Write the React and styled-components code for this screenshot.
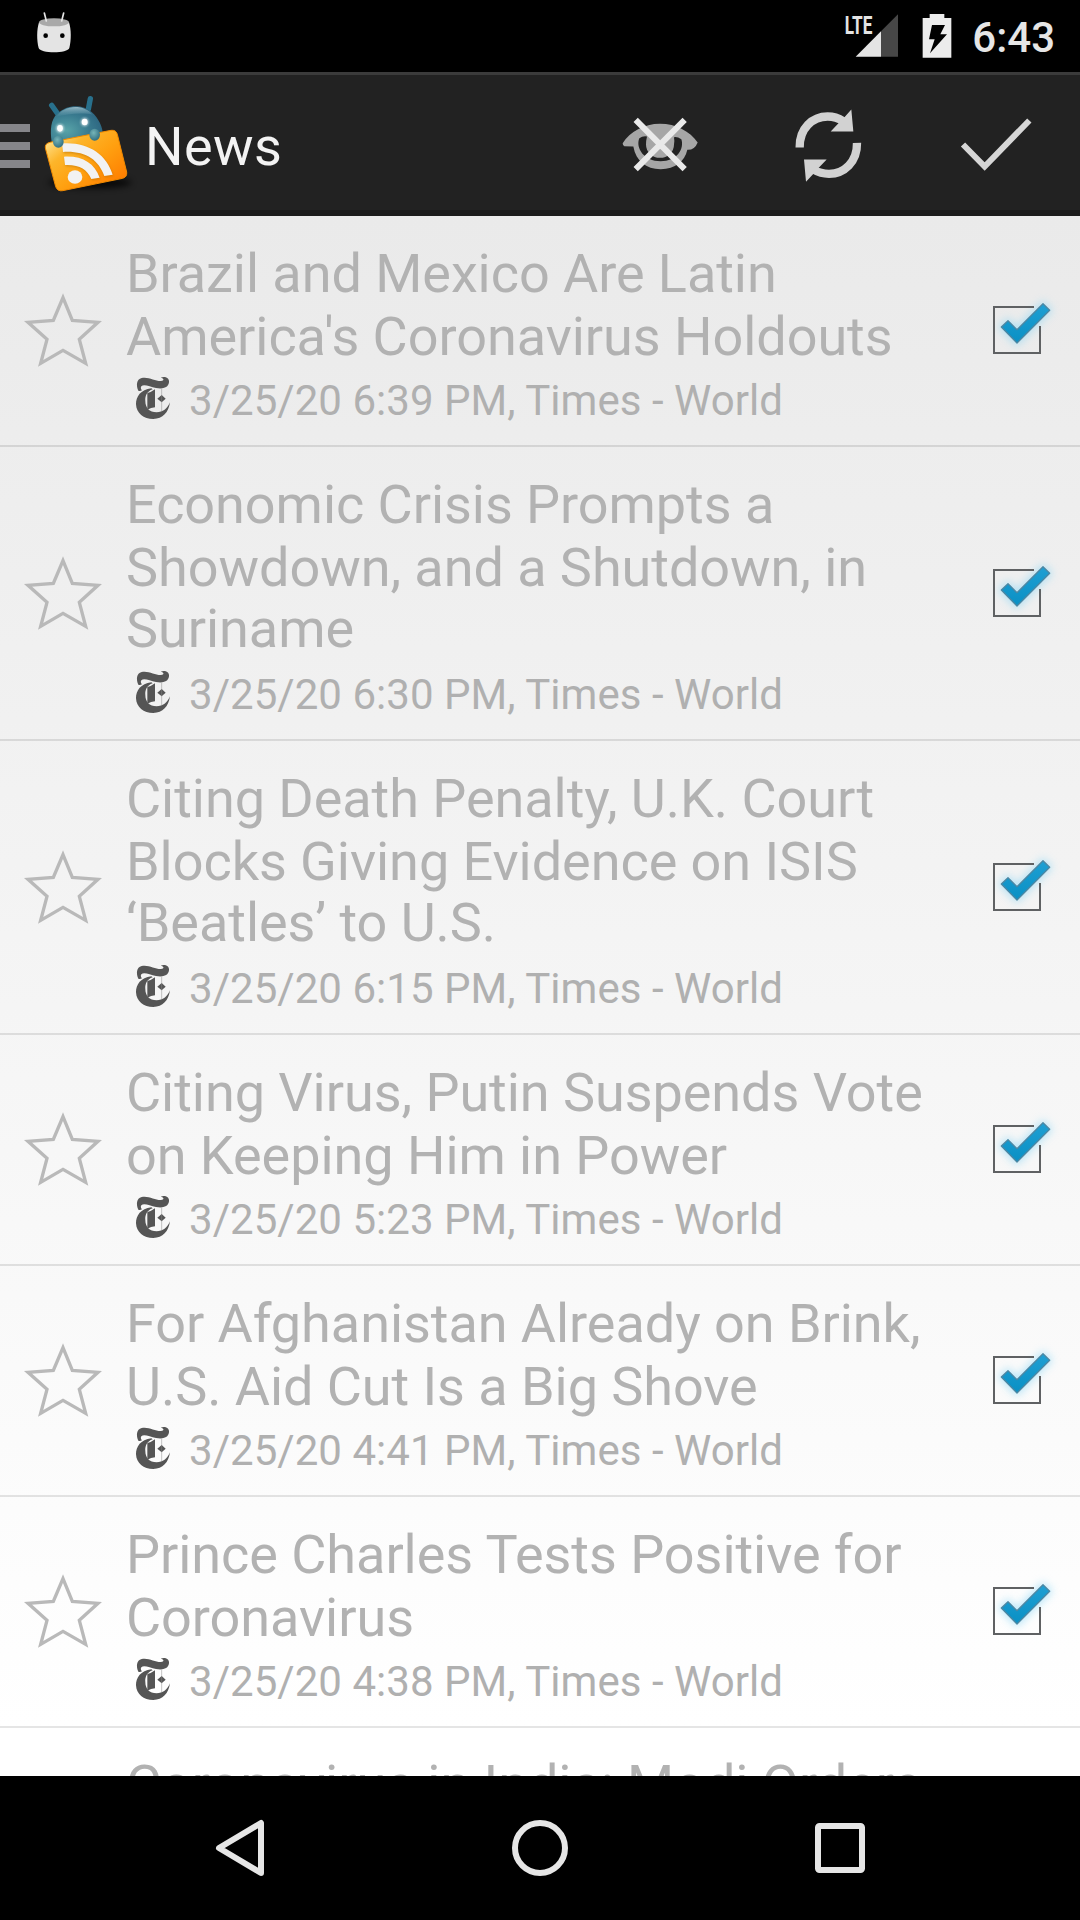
import React from 'react';
import styled, { createGlobalStyle } from 'styled-components';

const GlobalStyle = createGlobalStyle`
  body {
    margin: 0;
    background: #000;
    font-family: Roboto, "Liberation Sans", sans-serif;
  }
`;

const Screen = styled.div`
  display: flex;
  flex-direction: column;
  width: 1080px;
  height: 1920px;
  overflow: hidden;
`;

const StatusBar = styled.div`
  display: flex;
  justify-content: space-between;
  align-items: center;
  flex: none;
  height: 72px;
  box-sizing: border-box;
  padding: 0 25px 0 36px;
  background: #000;
`;

const Notifications = styled.div`
  display: flex;
  padding-bottom: 6px;
`;

const SystemIcons = styled.div`
  display: flex;
  align-items: center;
  gap: 22px;

  svg {
    overflow: visible;
  }
`;

const Clock = styled.div`
  margin-left: -2px;
  padding-top: 4px;
  font-size: 42px;
  line-height: 50px;
  font-weight: 500;
  color: #e6e6e6;
`;

const ActionBar = styled.header`
  display: flex;
  align-items: center;
  flex: none;
  height: 144px;
  box-sizing: border-box;
  border-top: 3px solid #3b3b3b;
  border-bottom: 6px solid #1b1b1b;
  background: #222;
`;

const Burger = styled.div`
  display: flex;
  flex-direction: column;
  gap: 10px;
  padding-top: 7px;
  width: 30px;
`;

const BurgerBar = styled.div`
  height: 8px;
  background: #86868a;
`;

const LogoSlot = styled.div`
  display: flex;
  flex: none;
  width: 110px;
  padding-top: 5px;
`;

const Title = styled.h1`
  margin: 0 0 0 5px;
  padding-top: 8px;
  flex: 1;
  font-size: 54px;
  line-height: 63px;
  font-weight: 400;
  letter-spacing: 0.4px;
  color: #f3f3f3;
`;

const Action = styled.button`
  display: flex;
  align-items: center;
  justify-content: center;
  width: 168px;
  height: 135px;
  padding: 0;
  border: 0;
  background: none;
`;

const List = styled.main`
  flex: 1;
  min-height: 0;
  overflow: hidden;
  background: linear-gradient(#eaeaea, #fff 1510px);
`;

const Row = styled.article`
  display: flex;
  align-items: center;
  border-bottom: 2px solid rgba(0, 0, 0, 0.1);
`;

const StarSlot = styled.div`
  display: flex;
  flex: none;
  width: 104px;
  padding: 0 0 1px 22px;
`;

const Entry = styled.div`
  flex: 1;
  padding: ${({ $top = 26 }) => $top}px 0 20px;
  white-space: nowrap;
`;

const Headline = styled.h2`
  display: flex;
  flex-direction: column;
  margin: 0 0 8px;
  font-weight: 400;
`;

const HeadlineLine = styled.span`
  font-size: 54px;
  line-height: 63px;
  letter-spacing: -0.05px;
  color: #b2b2b2;

  &:nth-child(3) {
    margin: -2px 0 2px;
  }
`;

const Meta = styled.div`
  display: flex;
  align-items: flex-start;
  height: 49px;
  padding-left: 9px;
  font-size: 42px;
  line-height: 49px;
  letter-spacing: 0.04px;
  color: #b0b0b0;
`;

const MetaText = styled.span`
  margin-left: 18px;
`;

const CheckSlot = styled.div`
  display: flex;
  flex: none;
  padding: 0 15px 1px 0;
`;

const NavBar = styled.nav`
  display: flex;
  justify-content: center;
  align-items: center;
  flex: none;
  height: 144px;
  background: #000;
`;

const NavButton = styled.button`
  display: flex;
  justify-content: center;
  align-items: center;
  width: 300px;
  height: 144px;
  padding: 0;
  border: 0;
  background: none;
`;

const RobotHead = () => (
  <svg width="36" height="44" viewBox="108 34 108 132">
    <path d="M117 68C110 90 110 122 116 145C120 162 204 162 208 145C214 122 214 90 207 68Z" fill="#e4e4e4" />
    <ellipse cx="162" cy="68" rx="45" ry="12" fill="#a9a9a9" />
    <path d="M133 40L139 64M191 40L185 64" stroke="#e4e4e4" strokeWidth="5" strokeLinecap="round" />
    <circle cx="137" cy="108" r="7" fill="#000" />
    <circle cx="187" cy="108" r="7" fill="#000" />
  </svg>
);

const Signal = () => (
  <svg width="56" height="46" viewBox="72 39 168 138">
    <text x="74" y="101" fontFamily="Roboto, sans-serif" fontWeight="700" fontSize="79" textLength="83" lengthAdjust="spacingAndGlyphs" fill="#e4e4e4">LTE</text>
    <path d="M183 94L234 43V170H183Z" fill="#474747" />
    <path d="M107 170L183 94V170Z" fill="#e4e4e4" />
  </svg>
);

const Battery = () => (
  <svg width="30" height="46" viewBox="307 39 90 138">
    <path d="M309 54H330V42H374V54H395V173H309Z" fill="#ececec" />
    <path d="M337 75H376L362 103H382L331 160L345 118H328Z" fill="#000" />
  </svg>
);

const AppLogo = () => (
  <svg width="110" height="130" viewBox="0 0 330 390">
    <defs>
      <radialGradient id="bodyFill" cx="0.3" cy="0.65" r="0.75">
        <stop offset="0" stopColor="#58a3a8" />
        <stop offset="0.55" stopColor="#3a7c90" />
        <stop offset="1" stopColor="#2b627e" />
      </radialGradient>
      <linearGradient id="shine" x1="0" y1="0" x2="0" y2="1">
        <stop offset="0" stopColor="#b9d4dc" stopOpacity="0.75" />
        <stop offset="1" stopColor="#6fa5b5" stopOpacity="0" />
      </linearGradient>
      <linearGradient id="cardFill" x1="0" y1="0.1" x2="0.9" y2="0.9">
        <stop offset="0" stopColor="#ffeaa0" />
        <stop offset="0.3" stopColor="#fdb52a" />
        <stop offset="0.6" stopColor="#ffa010" />
        <stop offset="1" stopColor="#ff7d00" />
      </linearGradient>
      <radialGradient id="handFill" cx="0.4" cy="0.35" r="0.7">
        <stop offset="0" stopColor="#76b5b8" />
        <stop offset="1" stopColor="#2e6c80" />
      </radialGradient>
      <filter id="soft" x="-30%" y="-100%" width="160%" height="300%">
        <feGaussianBlur stdDeviation="9" />
      </filter>
      <filter id="glow" x="-100%" y="-100%" width="300%" height="300%">
        <feGaussianBlur stdDeviation="3" />
      </filter>
    </defs>
    <ellipse cx="180" cy="308" rx="125" ry="17" fill="#050505" opacity="0.75" filter="url(#soft)" />
    <path d="M65 76L84 103M181 56L175 88" stroke="#28708c" strokeWidth="16" strokeLinecap="round" />
    <path d="M65 185C60 150 62 118 82 101C112 72 158 72 185 96C207 116 218 142 219 165L150 190Z" fill="url(#bodyFill)" />
    <path d="M78 112C100 74 160 70 188 104C160 98 110 100 78 112Z" fill="url(#shine)" />
    <g fill="#fff">
      <ellipse cx="90" cy="145" rx="12" ry="13" opacity="0.6" filter="url(#glow)" />
      <ellipse cx="164" cy="126" rx="12" ry="13" opacity="0.6" filter="url(#glow)" />
      <ellipse cx="90" cy="145" rx="8.500" ry="10" />
      <ellipse cx="164" cy="126" rx="9" ry="10" />
    </g>
    <path d="M60 187L243 151Q258 149 262 163L290 276Q292 291 278 295L98 332Q83 335 77 320L46 204Q44 191 60 187Z" fill="url(#cardFill)" stroke="#f18a00" strokeWidth="3" />
    <g fill="#b66a00" opacity="0.5" transform="translate(2 4)" filter="url(#glow)">
      <path d="M96 190C172 184 230 222 248 284L223 288C205 238 165 212 99 216Z" />
      <path d="M102 230C157 227 193 249 209 293L184 297C171 268 148 253 105 255Z" />
    </g>
    <g fill="#f2f2f2">
      <path d="M96 190C172 184 230 222 248 284L223 288C205 238 165 212 99 216Z" />
      <path d="M102 230C157 227 193 249 209 293L184 297C171 268 148 253 105 255Z" />
      <ellipse cx="135" cy="291" rx="22" ry="20" />
    </g>
    <ellipse cx="85" cy="185" rx="16" ry="18" fill="url(#handFill)" />
    <ellipse cx="194" cy="164" rx="16" ry="18" fill="url(#handFill)" />
  </svg>
);

const HideReadIcon = () => (
  <svg width="84" height="84" viewBox="54 121.5 252 252">
    <path
      d="M68 248C90 214 132 190 180 190C228 190 270 213 293 246Q284 269 262 268C254 303 226 326 182 326C138 326 108 302 100 258L73 257Q68 254 68 248ZM118 233C106 262 132 302 182 302C230 302 254 265 244 236Q232 228 222 230Q224 240 222 252A42 40 0 0 1 138 252Q138 240 141 228Q128 226 118 233Z"
      fill="#a6a6a6"
      fillRule="evenodd"
    />
    <path d="M107 178L254 326M254 178L107 326" stroke="#e9e9e9" strokeWidth="18" />
  </svg>
);

const RefreshIcon = () => (
  <svg width="84" height="84" viewBox="558 121.5 252 252">
    <g fill="none" stroke="#d2d2d2" strokeWidth="25">
      <path d="M599 261C598 203 638 168 683 168Q708 168 730 182" />
      <path d="M771 247C772 305 732 340 687 340Q662 340 640 327" />
    </g>
    <path d="M754 147L760 213H692L714 190L732 172ZM612 297H680L657 321L639 341L618 364Z" fill="#d2d2d2" />
  </svg>
);

const MarkReadIcon = () => (
  <svg width="84" height="84" viewBox="1062 121.5 252 252">
    <path d="M1089 252L1154 318L1288 180" fill="none" stroke="#d6d6d6" strokeWidth="18" />
  </svg>
);

const Star = () => (
  <svg width="82" height="76" viewBox="66 36 246 228">
    <path
      d="M189 53L217 121L294 127L238 178L257 250L189 211L122 250L141 178L84 127L160 121Z"
      fill="none"
      stroke="#b9b9b9"
      strokeWidth="10"
      strokeMiterlimit="6"
    />
  </svg>
);

const PaperLogo = () => (
  <svg width="36" height="44" viewBox="45 33 108 132">
    <g fill="#555">
      <path d="M55 77C48 62 49 43 65 39C85 34 106 49 123 48C133 47 133 40 122 38C131 33 149 36 147 52C145 70 126 72 108 69C90 66 72 56 64 64C61 68 63 73 66 76Q60 79 55 77Z" />
      <path d="M94 70C62 74 48 95 48 118C49 145 71 162 100 162C128 162 146 142 150 112C142 132 128 141 110 142C88 142 76 128 76 108C75 92 81 79 98 73Z" />
      <path d="M82 84Q95 81 105 73V127Q93 128 82 134Z" />
      <path d="M125 90L137 101L125 112L112 101Z" />
    </g>
    <path d="M125 70V140" stroke="#8a8a8a" strokeWidth="1.500" />
  </svg>
);

const CheckBox = () => (
  <svg width="80" height="80" viewBox="75 30 240 240">
    <defs>
      <linearGradient id="tickFill" x1="0" y1="0" x2="0" y2="1">
        <stop offset="0" stopColor="#1f9fd3" />
        <stop offset="1" stopColor="#0a90c4" />
      </linearGradient>
      <filter id="tickGlow" x="-40%" y="-40%" width="180%" height="180%">
        <feGaussianBlur stdDeviation="13" />
      </filter>
    </defs>
    <path d="M123 141L144 121L171 148L249 70L270 91L171 190Z" fill="#8ad6f5" stroke="#8ad6f5" strokeWidth="12" opacity="0.6" filter="url(#tickGlow)" />
    <path d="M222 81H102V219H240V138" fill="none" stroke="#5f6163" strokeWidth="6" />
    <path d="M124 141L144 122L171 149L249 71L269 91L171 189Z" fill="url(#tickFill)" stroke="#4c87a3" strokeWidth="4" strokeLinejoin="round" />
  </svg>
);

const BackIcon = () => (
  <svg width="60" height="60" viewBox="0 0 60 60">
    <path d="M51 5V55L9 30Z" fill="none" stroke="#e6e6e6" strokeWidth="6" strokeLinejoin="round" />
  </svg>
);

const HomeIcon = () => (
  <svg width="60" height="60" viewBox="0 0 60 60">
    <circle cx="30" cy="30" r="25" fill="none" stroke="#e6e6e6" strokeWidth="6" />
  </svg>
);

const RecentsIcon = () => (
  <svg width="60" height="60" viewBox="0 0 60 60">
    <rect x="8" y="8" width="44" height="44" rx="1.500" fill="none" stroke="#e6e6e6" strokeWidth="6" />
  </svg>
);

const articles = [
  { lines: ['Brazil and Mexico Are Latin', "America's Coronavirus Holdouts"], time: '6:39' },
  { lines: ['Economic Crisis Prompts a', 'Showdown, and a Shutdown, in', 'Suriname'], time: '6:30' },
  { lines: ['Citing Death Penalty, U.K. Court', 'Blocks Giving Evidence on ISIS', '‘Beatles’ to U.S.'], time: '6:15' },
  { lines: ['Citing Virus, Putin Suspends Vote', 'on Keeping Him in Power'], time: '5:23' },
  { lines: ['For Afghanistan Already on Brink,', 'U.S. Aid Cut Is a Big Shove'], time: '4:41' },
  { lines: ['Prince Charles Tests Positive for', 'Coronavirus'], time: '4:38' },
];

export default function App() {
  return (
    <Screen>
      <GlobalStyle />
      <StatusBar>
        <Notifications>
          <RobotHead />
        </Notifications>
        <SystemIcons>
          <Signal />
          <Battery />
          <Clock>6:43</Clock>
        </SystemIcons>
      </StatusBar>
      <ActionBar>
        <Burger>
          <BurgerBar />
          <BurgerBar />
          <BurgerBar />
        </Burger>
        <LogoSlot>
          <AppLogo />
        </LogoSlot>
        <Title>News</Title>
        <Action aria-label="Hide read"><HideReadIcon /></Action>
        <Action aria-label="Refresh"><RefreshIcon /></Action>
        <Action aria-label="Mark all as read"><MarkReadIcon /></Action>
      </ActionBar>
      <List>
        {articles.map(({ lines, time }) => (
          <Row key={time}>
            <StarSlot><Star /></StarSlot>
            <Entry>
              <Headline>
                {lines.map((line) => <HeadlineLine key={line}>{line}</HeadlineLine>)}
              </Headline>
              <Meta>
                <PaperLogo />
                <MetaText>3/25/20 {time} PM, Times - World</MetaText>
              </Meta>
            </Entry>
            <CheckSlot><CheckBox /></CheckSlot>
          </Row>
        ))}
        <Row>
          <StarSlot />
          <Entry $top={25}>
            <Headline><HeadlineLine>Coronavirus in India: Modi Orders</HeadlineLine></Headline>
          </Entry>
        </Row>
      </List>
      <NavBar>
        <NavButton aria-label="Back"><BackIcon /></NavButton>
        <NavButton aria-label="Home"><HomeIcon /></NavButton>
        <NavButton aria-label="Recents"><RecentsIcon /></NavButton>
      </NavBar>
    </Screen>
  );
}
